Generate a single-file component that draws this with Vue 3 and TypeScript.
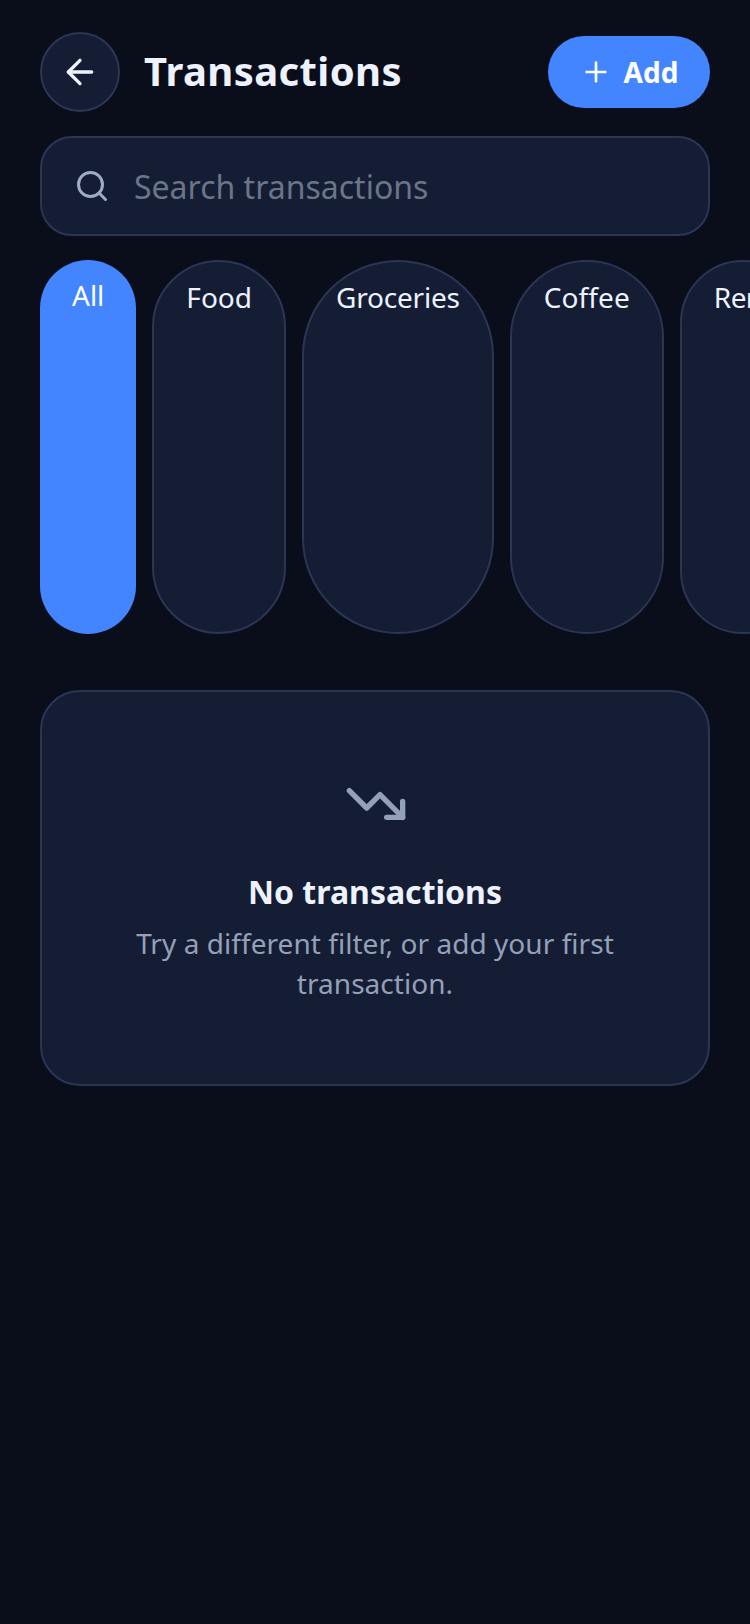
<script setup lang="ts">
interface Chip {
  label: string
  tracking: number
}

const chips: Chip[] = [
  { label: 'All', tracking: 0 },
  { label: 'Food', tracking: 0 },
  { label: 'Groceries', tracking: -0.2 },
  { label: 'Coffee', tracking: 0.1 },
  { label: 'Rent', tracking: -0.6 },
  { label: 'Travel', tracking: 0 },
]
</script>

<template>
  <div class="page">
    <header class="header">
      <button class="back" aria-label="Back">
        <svg width="40" height="40" viewBox="0 0 24 24" fill="none" stroke="currentColor" stroke-width="2" stroke-linecap="round" stroke-linejoin="round">
          <path d="m12 19-7-7 7-7" />
          <path d="M19 12H5" />
        </svg>
      </button>
      <h1 class="title">Transactions</h1>
      <button class="add">
        <svg width="32" height="32" viewBox="0 0 24 24" fill="none" stroke="currentColor" stroke-width="2" stroke-linecap="round" stroke-linejoin="round">
          <path d="M5 12h14" />
          <path d="M12 5v14" />
        </svg>
        <span>Add</span>
      </button>
    </header>

    <div class="search">
      <svg width="36" height="36" viewBox="0 0 24 24" fill="none" stroke="currentColor" stroke-width="2" stroke-linecap="round" stroke-linejoin="round">
        <circle cx="11" cy="11" r="8" />
        <path d="m21 21-4.3-4.3" />
      </svg>
      <span class="placeholder">Search transactions</span>
    </div>

    <div class="chips">
      <div
        v-for="(chip, i) in chips"
        :key="chip.label"
        class="chip"
        :class="{ active: i === 0 }"
        :style="{ letterSpacing: `${chip.tracking}px` }"
      >{{ chip.label }}</div>
    </div>

    <section class="empty">
      <svg class="empty-icon" width="64" height="64" viewBox="0 0 24 24" fill="none" stroke="currentColor" stroke-width="2" stroke-linecap="round" stroke-linejoin="round">
        <polyline points="22 17 13.5 8.5 8.5 13.5 2 7" />
        <polyline points="16 17 22 17 22 11" />
      </svg>
      <h2 class="empty-title">No transactions</h2>
      <p class="empty-text">Try a different filter, or add your first transaction.</p>
    </section>
  </div>
</template>

<style>
html, body { margin: 0; background: #0a0e1a; }
</style>

<style scoped>
.page {
  box-sizing: border-box;
  width: 750px;
  min-height: 1624px;
  padding: 32px 40px;
  background: #0a0e1a;
  font-family: "Noto Sans", sans-serif;
  color: #eef2ff;
  overflow: hidden;
  display: flex;
  flex-direction: column;
}
.header {
  display: flex;
  align-items: center;
  height: 80px;
}
.back {
  box-sizing: border-box;
  width: 80px;
  height: 80px;
  border-radius: 50%;
  border: 2px solid #2a3654;
  background: #151d35;
  color: #eef2ff;
  display: flex;
  align-items: center;
  justify-content: center;
  padding: 0;
  flex: none;
}
.title {
  margin: 0 0 0 24px;
  flex: 1;
  font-size: 40px;
  line-height: 54px;
  font-weight: 700;
  letter-spacing: 0.4px;
  padding-bottom: 2px;
}
.add {
  box-sizing: border-box;
  width: 162px;
  height: 72px;
  border: 0;
  border-radius: 36px;
  background: #4285ff;
  color: #fff;
  display: flex;
  align-items: center;
  justify-content: center;
  gap: 12px;
  padding: 0;
  font-family: inherit;
  font-size: 28px;
  font-weight: 700;
}
.search {
  box-sizing: border-box;
  margin-top: 24px;
  height: 100px;
  border: 2px solid #2a3654;
  border-radius: 32px;
  background: #151d35;
  display: flex;
  align-items: center;
  gap: 24px;
  padding: 0 32px;
  color: #a0acc4;
}
.placeholder {
  font-size: 32px;
  color: #6b7588;
}
.chips {
  margin-top: 24px;
  margin-right: -40px;
  height: 374px;
  display: flex;
  gap: 16px;
  overflow: hidden;
}
.chip {
  box-sizing: border-box;
  flex: none;
  padding: 16px 32px;
  border: 2px solid #2a3654;
  border-radius: 999px;
  background: #151d35;
  font-size: 28px;
  line-height: 38px;
  color: #eef2ff;
}
.chip.active {
  background: #4285ff;
  border: 0;
  color: #fff;
}
.empty {
  box-sizing: border-box;
  margin-top: 56px;
  height: 396px;
  border: 2px solid #2a3654;
  border-radius: 40px;
  background: #151d35;
  padding: 80px 48px;
  display: flex;
  flex-direction: column;
  align-items: center;
  text-align: center;
  color: #94a0b8;
}
.empty-icon {
  margin-left: 2px;
}
.empty-title {
  margin: 34px 0 0;
  font-size: 32px;
  line-height: 44px;
  font-weight: 700;
  color: #eef2ff;
}
.empty-text {
  margin: 9px 0 0;
  font-size: 28px;
  line-height: 40px;
  letter-spacing: 0.05px;
  color: #94a0b8;
}
</style>
